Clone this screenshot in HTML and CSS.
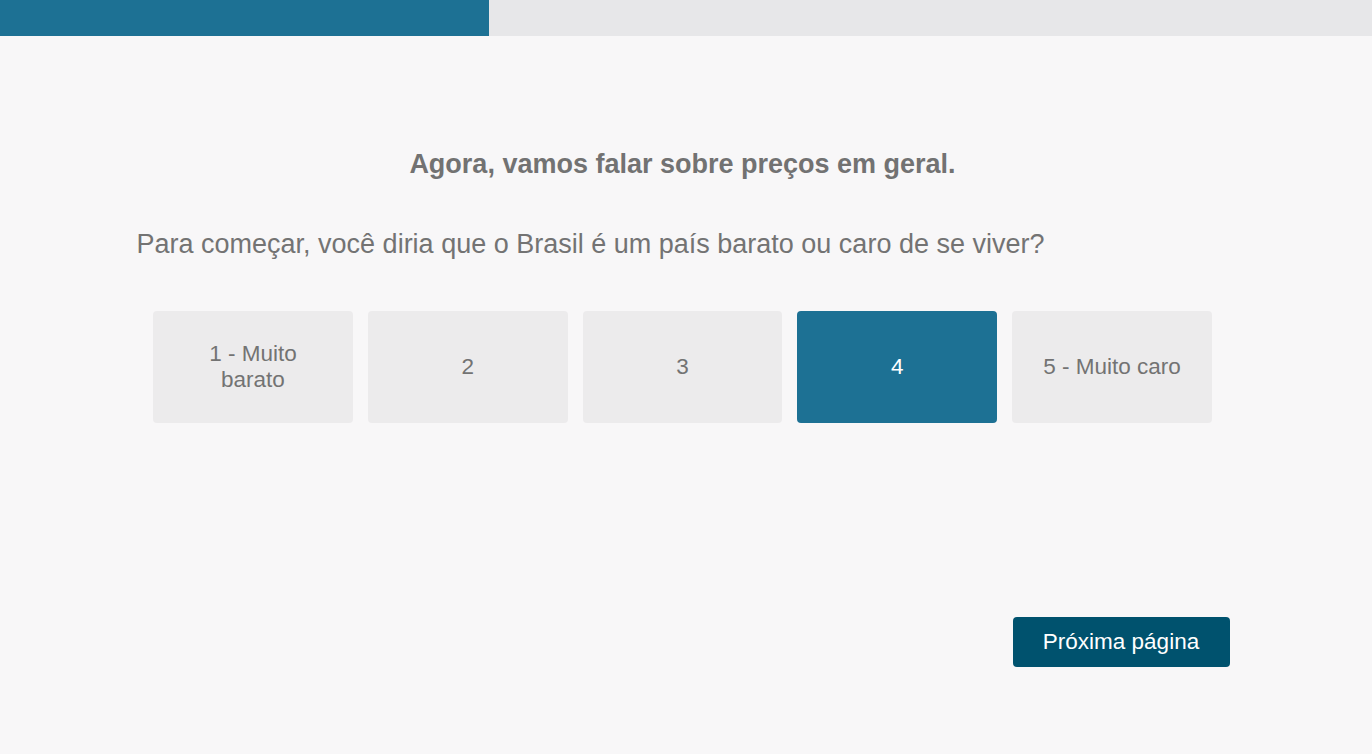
FILE: index.html
```html
<!DOCTYPE html>
<html lang="pt-BR">
<head>
<meta charset="utf-8">
<title>Pesquisa</title>
<link rel="stylesheet" href="styles.css">
</head>
<body>
<div class="progress"><div class="progress-fill" style="width:35.64%"></div></div>
<div class="page">
<main class="content">
  <h1 class="title">Agora, vamos falar sobre preços em geral.</h1>
  <p class="question">Para começar, você diria que o Brasil é um país barato ou caro de se viver?</p>
  <div class="options">
    <button class="option">1 - Muito<br>barato</button>
    <button class="option">2</button>
    <button class="option">3</button>
    <button class="option selected">4</button>
    <button class="option">5 - Muito caro</button>
  </div>
  <div class="footer">
    <button class="next">Próxima página</button>
  </div>
</main>
</div>
</body>
</html>
```

FILE: styles.css
```css
* { box-sizing: border-box; }
html, body { margin: 0; padding: 0; }
body {
  background: #f8f7f8;
  font-family: "Liberation Sans", Arial, sans-serif;
  color: #737373;
  height: 754px;
  overflow: hidden;
}
.progress {
  height: 36px;
  background: #e7e7e9;
}
.progress-fill {
  height: 100%;
  background: #1d7194;
}
.page {
  padding-right: 7px;
}
.content {
  width: 1094px;
  margin: 0 auto;
  padding-top: 114px;
}
.title {
  margin: 0;
  text-align: center;
  font-size: 27px;
  font-weight: bold;
  line-height: 28px;
  color: #727272;
}
.question {
  margin: 52px 0 0;
  padding-left: 1px;
  font-size: 27px;
  line-height: 28px;
  color: #737373;
}
.options {
  display: flex;
  gap: 15px;
  padding: 0 17.5px;
  margin-top: 53px;
}
.option {
  flex: 1 1 0;
  height: 112px;
  border: none;
  border-radius: 4px;
  background: #ecebec;
  color: #737373;
  font-family: "Liberation Sans", Arial, sans-serif;
  font-size: 22.5px;
  line-height: 26px;
  padding: 0 20px;
  cursor: pointer;
}
.option.selected {
  background: #1d7194;
  color: #ffffff;
}
.footer {
  display: flex;
  justify-content: flex-end;
  margin-top: 194px;
}
.next {
  width: 217px;
  height: 50px;
  border: none;
  border-radius: 4px;
  background: #00526e;
  color: #ffffff;
  font-family: "Liberation Sans", Arial, sans-serif;
  font-size: 22.5px;
  cursor: pointer;
}
```
